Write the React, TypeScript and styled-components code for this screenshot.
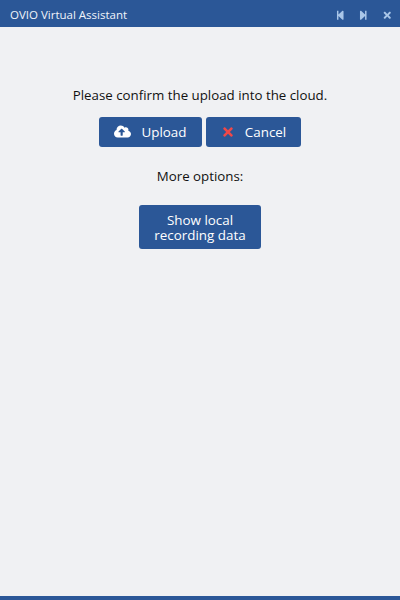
import { createGlobalStyle } from "styled-components";
import styled from "styled-components";
import { FaCloudUploadAlt, FaStepBackward, FaStepForward, FaTimes } from "react-icons/fa";

const GlobalStyle = createGlobalStyle`
  html, body {
    margin: 0;
    padding: 0;
    height: 100%;
  }
  #root {
    height: 100%;
  }
`;

const Window = styled.div`
  box-sizing: border-box;
  width: 400px;
  height: 600px;
  display: flex;
  flex-direction: column;
  background: #f0f1f3;
  border-bottom: 4px solid #2b5797;
  font-family: "Open Sans", "Noto Sans", sans-serif;
  color: #111;
  overflow: hidden;
`;

const TitleBar = styled.div`
  height: 27px;
  flex-shrink: 0;
  display: flex;
  align-items: center;
  justify-content: space-between;
  padding: 0 8px 0 10px;
  background: #2b5797;
`;

const Title = styled.span`
  padding-top: 2px;
  font-size: 11.5px;
  color: #f0f4fa;
`;

const WindowControls = styled.div`
  display: flex;
  align-items: center;
  gap: 13px;
  padding-top: 3px;
  color: #a9c6e8;
  font-size: 10.5px;
`;

const Content = styled.div`
  display: flex;
  flex-direction: column;
  align-items: center;
  padding-top: 59px;
`;

const Message = styled.div`
  font-size: 13.3px;
  line-height: 18px;
`;

const ButtonRow = styled.div`
  display: flex;
  gap: 4px;
  margin-top: 13px;
`;

const Button = styled.button<{ $width: number }>`
  box-sizing: border-box;
  width: ${(props) => props.$width}px;
  min-height: 30px;
  display: flex;
  align-items: center;
  justify-content: center;
  gap: 10px;
  padding: 0 0 1px;
  border: none;
  border-radius: 3px;
  background: #2b5797;
  color: #fff;
  font-family: inherit;
  font-size: 13.4px;
`;

const TallButton = styled(Button)`
  height: 44px;
  margin-top: 20px;
  padding: 1px 0 0;
  line-height: 15px;
`;

const OptionsLabel = styled(Message)`
  margin-top: 20px;
`;

const CancelIcon = styled(FaTimes)`
  color: #f04848;
  font-size: 14px;
`;

const UploadIcon = styled(FaCloudUploadAlt)`
  font-size: 17px;
`;

export default function App() {
  return (
    <>
      <GlobalStyle />
      <Window>
        <TitleBar>
          <Title>OVIO Virtual Assistant</Title>
          <WindowControls>
            <FaStepBackward />
            <FaStepForward />
            <FaTimes />
          </WindowControls>
        </TitleBar>
        <Content>
          <Message>Please confirm the upload into the cloud.</Message>
          <ButtonRow>
            <Button $width={103}>
              <UploadIcon />
              Upload
            </Button>
            <Button $width={95}>
              <CancelIcon />
              Cancel
            </Button>
          </ButtonRow>
          <OptionsLabel>More options:</OptionsLabel>
          <TallButton $width={122}>
            Show local
            <br />
            recording data
          </TallButton>
        </Content>
      </Window>
    </>
  );
}
